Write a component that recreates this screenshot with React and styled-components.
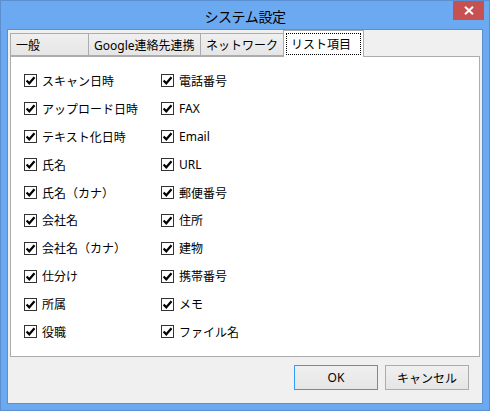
import React from "react";
import styled, { createGlobalStyle } from "styled-components";

const LEFT_ITEMS = [
  "スキャン日時",
  "アップロード日時",
  "テキスト化日時",
  "氏名",
  "氏名（カナ）",
  "会社名",
  "会社名（カナ）",
  "仕分け",
  "所属",
  "役職",
];

const RIGHT_ITEMS = [
  "電話番号",
  "FAX",
  "Email",
  "URL",
  "郵便番号",
  "住所",
  "建物",
  "携帯番号",
  "メモ",
  "ファイル名",
];

const TABS = [
  { label: "一般", width: 79 },
  { label: "Google連絡先連携", width: 113 },
  { label: "ネットワーク", width: 84 },
  { label: "リスト項目", width: 81, active: true },
];

function CheckItem({ label }) {
  return (
    <Item>
      <Box>
        <svg width="11" height="11" viewBox="0 0 11 11">
          <path
            d="M1.6 5.4 L4.3 8.3 L9.5 2.3"
            fill="none"
            stroke="#000"
            strokeWidth="2.2"
          />
        </svg>
      </Box>
      <span>{label}</span>
    </Item>
  );
}

function App() {
  return (
    <>
      <GlobalStyle />
      <Window>
        <TitleBar>
          <Title>システム設定</Title>
          <CloseButton>
            <svg width="10" height="9" viewBox="0 0 10 9">
              <path d="M1 0.8 L9 8.2 M9 0.8 L1 8.2" stroke="#fff" strokeWidth="2" />
            </svg>
          </CloseButton>
        </TitleBar>
        <Client>
          <TabStrip>
            {TABS.map((tab) => (
              <Tab key={tab.label} $active={tab.active} $width={tab.width}>
                {tab.active ? <Focus>{tab.label}</Focus> : tab.label}
              </Tab>
            ))}
          </TabStrip>
          <Panel>
            <ItemGrid>
              {[...LEFT_ITEMS, ...RIGHT_ITEMS].map((label) => (
                <CheckItem key={label} label={label} />
              ))}
            </ItemGrid>
          </Panel>
          <ButtonRow>
            <Button $default>OK</Button>
            <Button>キャンセル</Button>
          </ButtonRow>
        </Client>
      </Window>
    </>
  );
}

const GlobalStyle = createGlobalStyle`
  html, body {
    margin: 0;
    padding: 0;
    background: #fff;
  }
  body {
    font-family: "Noto Sans", "Noto Sans CJK JP", sans-serif;
    font-size: 12px;
    color: #000;
  }
`;

const Window = styled.div`
  box-sizing: border-box;
  width: 490px;
  height: 411px;
  background: #6ba9f0;
  border: 1px solid #5b8fd2;
  display: flex;
  flex-direction: column;
`;

const TitleBar = styled.div`
  position: relative;
  height: 28px;
  display: flex;
  align-items: center;
  justify-content: center;
  flex-shrink: 0;
`;

const Title = styled.div`
  font-family: "Noto Sans CJK JP", sans-serif;
  font-size: 14px;
  letter-spacing: -0.4px;
  color: #000;
  padding-top: 2px;
`;

const CloseButton = styled.div`
  position: absolute;
  top: 0;
  right: 5px;
  width: 31px;
  height: 19px;
  background: #c75050;
  display: flex;
  align-items: center;
  justify-content: center;
`;

const Client = styled.div`
  flex: 1;
  margin: 0 6px 6px;
  border: 1px solid #5b8fd2;
  background: #f0f0f0;
  padding: 0 2px;
  display: flex;
  flex-direction: column;
`;

const TabStrip = styled.div`
  height: 26px;
  display: flex;
  align-items: flex-end;
  flex-shrink: 0;
`;

const Tab = styled.div`
  box-sizing: border-box;
  width: ${(p) => p.$width}px;
  height: ${(p) => (p.$active ? 27 : 23)}px;
  margin-right: -1px;
  margin-bottom: ${(p) => (p.$active ? -1 : 0)}px;
  border: 1px solid #acacac;
  border-bottom: ${(p) => (p.$active ? "none" : "1px solid #acacac")};
  background: ${(p) =>
    p.$active ? "#fff" : "linear-gradient(#f0f0f0, #e5e5e5)"};
  position: relative;
  z-index: ${(p) => (p.$active ? 2 : 1)};
  display: flex;
  align-items: ${(p) => (p.$active ? "flex-start" : "center")};
  padding: ${(p) => (p.$active ? "2px 2px 0" : "0 0 0 5px")};
  white-space: nowrap;
  font-family: "Noto Sans", "Noto Sans CJK JP", sans-serif;
`;

const Focus = styled.div`
  box-sizing: border-box;
  width: 100%;
  height: 22px;
  border: 1px dotted #000;
  padding-left: 4px;
  display: flex;
  align-items: center;
`;

const Panel = styled.div`
  box-sizing: border-box;
  height: 301px;
  background: #fff;
  border: 1px solid #acacac;
  flex-shrink: 0;
`;

const ItemGrid = styled.div`
  display: grid;
  grid-template-columns: 137px 137px;
  grid-template-rows: repeat(10, 27.9px);
  grid-auto-flow: column;
  padding: 10px 0 0 13px;
`;

const Item = styled.div`
  display: flex;
  align-items: center;
  gap: 5px;
  white-space: nowrap;
`;

const Box = styled.div`
  box-sizing: border-box;
  width: 13px;
  height: 13px;
  border: 1px solid #333;
  background: #fff;
  display: flex;
  align-items: center;
  justify-content: center;
  flex-shrink: 0;
`;

const ButtonRow = styled.div`
  display: flex;
  justify-content: flex-end;
  gap: 7px;
  padding: 8px 11px 0 0;
`;

const Button = styled.div`
  box-sizing: border-box;
  width: 84px;
  height: 25px;
  border: 1px solid ${(p) => (p.$default ? "#3399ff" : "#acacac")};
  background: linear-gradient(#f0f0f0, #e5e5e5);
  display: flex;
  align-items: center;
  justify-content: center;
  font-family: "Noto Sans", "Noto Sans CJK JP", sans-serif;
`;

export default App;
